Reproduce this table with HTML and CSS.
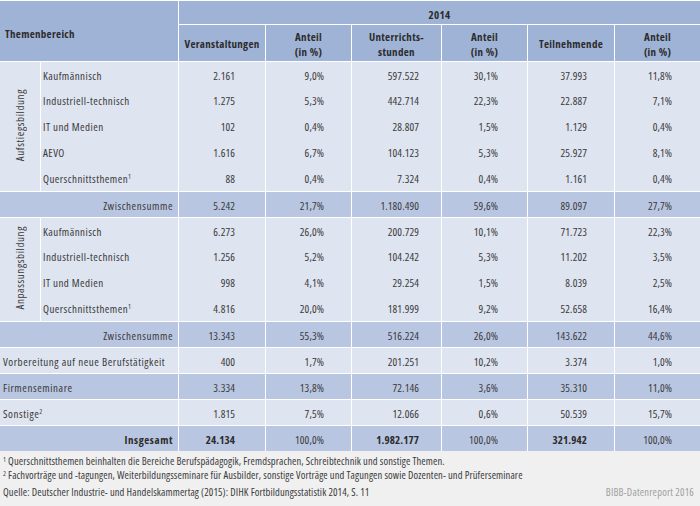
FILE: index.html
```html
<!DOCTYPE html>
<html lang="de">
<head>
<meta charset="utf-8">
<title>Fortbildungsstatistik 2014</title>
<link rel="stylesheet" href="styles.css">
</head>
<body>
<div class="page">
<table class="stats">
  <colgroup>
    <col class="c-rot"><col class="c-name"><col class="c1"><col class="c2"><col class="c3"><col class="c4"><col class="c5"><col class="c6">
  </colgroup>
  <thead>
    <tr class="h1">
      <th colspan="2" rowspan="2" class="theme">Themenbereich</th>
      <th colspan="6" class="year">2014</th>
    </tr>
    <tr class="h2">
      <th class="sep">Veranstaltungen</th>
      <th class="sep">Anteil<br>(in %)</th>
      <th class="sep">Unterrichts-<br>stunden</th>
      <th class="sep">Anteil<br>(in %)</th>
      <th class="sep">Teilnehmende</th>
      <th class="sep">Anteil<br>(in %)</th>
    </tr>
  </thead>
  <tbody class="light">
    <tr class="start">
      <td rowspan="5" class="rot"><span>Aufstiegsbildung</span></td>
      <td class="name sep">Kaufmännisch</td>
      <td class="n n1 sep">2.161</td><td class="n n2 sep">9,0%</td><td class="n n3 sep">597.522</td><td class="n n4 sep">30,1%</td><td class="n n5 sep">37.993</td><td class="n n6 sep">11,8%</td>
    </tr>
    <tr>
      <td class="name sep">Industriell-technisch</td>
      <td class="n n1 sep">1.275</td><td class="n n2 sep">5,3%</td><td class="n n3 sep">442.714</td><td class="n n4 sep">22,3%</td><td class="n n5 sep">22.887</td><td class="n n6 sep">7,1%</td>
    </tr>
    <tr>
      <td class="name sep">IT und Medien</td>
      <td class="n n1 sep">102</td><td class="n n2 sep">0,4%</td><td class="n n3 sep">28.807</td><td class="n n4 sep">1,5%</td><td class="n n5 sep">1.129</td><td class="n n6 sep">0,4%</td>
    </tr>
    <tr>
      <td class="name sep">AEVO</td>
      <td class="n n1 sep">1.616</td><td class="n n2 sep">6,7%</td><td class="n n3 sep">104.123</td><td class="n n4 sep">5,3%</td><td class="n n5 sep">25.927</td><td class="n n6 sep">8,1%</td>
    </tr>
    <tr>
      <td class="name sep">Querschnittsthemen<sup>1</sup></td>
      <td class="n n1 sep">88</td><td class="n n2 sep">0,4%</td><td class="n n3 sep">7.324</td><td class="n n4 sep">0,4%</td><td class="n n5 sep">1.161</td><td class="n n6 sep">0,4%</td>
    </tr>
  </tbody>
  <tbody class="dark">
    <tr class="start">
      <td colspan="2" class="sub">Zwischensumme</td>
      <td class="n n1 sep">5.242</td><td class="n n2 sep">21,7%</td><td class="n n3 sep">1.180.490</td><td class="n n4 sep">59,6%</td><td class="n n5 sep">89.097</td><td class="n n6 sep">27,7%</td>
    </tr>
  </tbody>
  <tbody class="light">
    <tr class="start">
      <td rowspan="4" class="rot"><span>Anpassungsbildung</span></td>
      <td class="name sep">Kaufmännisch</td>
      <td class="n n1 sep">6.273</td><td class="n n2 sep">26,0%</td><td class="n n3 sep">200.729</td><td class="n n4 sep">10,1%</td><td class="n n5 sep">71.723</td><td class="n n6 sep">22,3%</td>
    </tr>
    <tr>
      <td class="name sep">Industriell-technisch</td>
      <td class="n n1 sep">1.256</td><td class="n n2 sep">5,2%</td><td class="n n3 sep">104.242</td><td class="n n4 sep">5,3%</td><td class="n n5 sep">11.202</td><td class="n n6 sep">3,5%</td>
    </tr>
    <tr>
      <td class="name sep">IT und Medien</td>
      <td class="n n1 sep">998</td><td class="n n2 sep">4,1%</td><td class="n n3 sep">29.254</td><td class="n n4 sep">1,5%</td><td class="n n5 sep">8.039</td><td class="n n6 sep">2,5%</td>
    </tr>
    <tr>
      <td class="name sep">Querschnittsthemen<sup>1</sup></td>
      <td class="n n1 sep">4.816</td><td class="n n2 sep">20,0%</td><td class="n n3 sep">181.999</td><td class="n n4 sep">9,2%</td><td class="n n5 sep">52.658</td><td class="n n6 sep">16,4%</td>
    </tr>
  </tbody>
  <tbody class="dark">
    <tr class="start">
      <td colspan="2" class="sub">Zwischensumme</td>
      <td class="n n1 sep">13.343</td><td class="n n2 sep">55,3%</td><td class="n n3 sep">516.224</td><td class="n n4 sep">26,0%</td><td class="n n5 sep">143.622</td><td class="n n6 sep">44,6%</td>
    </tr>
  </tbody>
  <tbody class="light">
    <tr class="start">
      <td colspan="2" class="label">Vorbereitung auf neue Berufstätigkeit</td>
      <td class="n n1 sep">400</td><td class="n n2 sep">1,7%</td><td class="n n3 sep">201.251</td><td class="n n4 sep">10,2%</td><td class="n n5 sep">3.374</td><td class="n n6 sep">1,0%</td>
    </tr>
  </tbody>
  <tbody class="dark">
    <tr class="start">
      <td colspan="2" class="label">Firmenseminare</td>
      <td class="n n1 sep">3.334</td><td class="n n2 sep">13,8%</td><td class="n n3 sep">72.146</td><td class="n n4 sep">3,6%</td><td class="n n5 sep">35.310</td><td class="n n6 sep">11,0%</td>
    </tr>
  </tbody>
  <tbody class="light">
    <tr class="start">
      <td colspan="2" class="label">Sonstige<sup>2</sup></td>
      <td class="n n1 sep">1.815</td><td class="n n2 sep">7,5%</td><td class="n n3 sep">12.066</td><td class="n n4 sep">0,6%</td><td class="n n5 sep">50.539</td><td class="n n6 sep">15,7%</td>
    </tr>
  </tbody>
  <tbody class="dark total">
    <tr class="start">
      <td colspan="2" class="sub strong">Insgesamt</td>
      <td class="n n1 sep strong">24.134</td><td class="n n2 sep">100,0%</td><td class="n n3 sep strong">1.982.177</td><td class="n n4 sep">100,0%</td><td class="n n5 sep strong">321.942</td><td class="n n6 sep">100,0%</td>
    </tr>
  </tbody>
</table>
<div class="notes">
  <p class="note"><sup>1</sup> Querschnittsthemen beinhalten die Bereiche Berufspädagogik, Fremdsprachen, Schreibtechnik und sonstige Themen.</p>
  <p class="note"><sup>2</sup> Fachvorträge und -tagungen, Weiterbildungsseminare für Ausbilder, sonstige Vorträge und Tagungen sowie Dozenten- und Prüferseminare</p>
  <div class="source-row">
    <p class="source">Quelle: Deutscher Industrie- und Handelskammertag (2015): DIHK Fortbildungsstatistik 2014, S. 11</p>
    <p class="brand">BIBB-Datenreport 2016</p>
  </div>
</div>
</div>
</body>
</html>
```

FILE: styles.css
```css
html, body {
  margin: 0;
  padding: 0;
}
body {
  background: #f0f0f0;
  font-family: "Open Sans", "DejaVu Sans Condensed", sans-serif;
  font-stretch: 75%;
  color: #3a3a3a;
  font-size: 11px;
}
.page {
  width: 700px;
}
.stats {
  width: 700px;
  table-layout: fixed;
  border-collapse: separate;
  border-spacing: 0;
  border-top: 1px solid #fff;
  white-space: nowrap;
}
.c-rot { width: 40px; }
.c-name { width: 138px; }
.c1 { width: 87px; }
.c2 { width: 86px; }
.c3 { width: 90px; }
.c4 { width: 86px; }
.c5 { width: 87px; }
.c6 { width: 86px; }

.stats th, .stats td {
  padding: 0;
  font-weight: normal;
}
.stats thead th {
  background: #9fb3d7;
  color: #2c2c2c;
  font-weight: bold;
  line-height: 15px;
  letter-spacing: 0.3px;
}
.stats .h1 th { height: 23px; }
.stats .h1 .year { border-left: 1px solid #fff; padding-top: 3px; height: 20px; }
.stats .h2 th { height: 35px; border-top: 1px solid #fff; padding-top: 1px; }
.stats th.theme { text-align: left; padding-left: 5px; padding-top: 5px; }
.stats .sep { border-left: 1px solid #fff; }

.light td { background: #dee4f0; }
.dark td { background: #b9c6e1; }
.stats tbody td { height: 24px; padding-top: 2px; line-height: 14px; letter-spacing: 0.1px; }
.stats tbody tr.start td { border-top: 1px solid #fff; height: 23px; }

.stats td.rot {
  text-align: center;
  vertical-align: middle;
  padding-top: 0;
  letter-spacing: 0.6px;
}
.rot span {
  display: inline-block;
  writing-mode: vertical-rl;
  transform: rotate(180deg);
}
.stats td.name { padding-left: 2px; letter-spacing: 0.45px; }
.stats td.label { padding-left: 3px; letter-spacing: 0.55px; }
.stats td.sub { text-align: right; padding-right: 5px; letter-spacing: 0.55px; }
.stats td.n { text-align: right; }
.stats td.n1 { padding-right: 30px; }
.stats td.n2 { padding-right: 27px; }
.stats td.n3 { padding-right: 22px; }
.stats td.n4 { padding-right: 29px; }
.stats td.n5 { padding-right: 27px; }
.stats td.n6 { padding-right: 28px; }
.stats td.strong { font-weight: bold; color: #2c2c2c; }

sup {
  font-size: 7px;
  vertical-align: top;
  position: relative;
  top: -2px;
  letter-spacing: 0;
}
.notes {
  padding: 3px 3px 0 3px;
  font-size: 10.5px;
  letter-spacing: 0.12px;
  color: #3a3a3a;
}
.note {
  margin: 0;
  line-height: 14px;
}
.note sup { top: -1px; }
.source-row {
  display: flex;
  justify-content: space-between;
  margin-top: 3px;
}
.source { margin: 0; line-height: 14px; }
.brand { margin: 0; line-height: 14px; color: #a0a0a0; padding-right: 3px; letter-spacing: 0.2px; }
```
